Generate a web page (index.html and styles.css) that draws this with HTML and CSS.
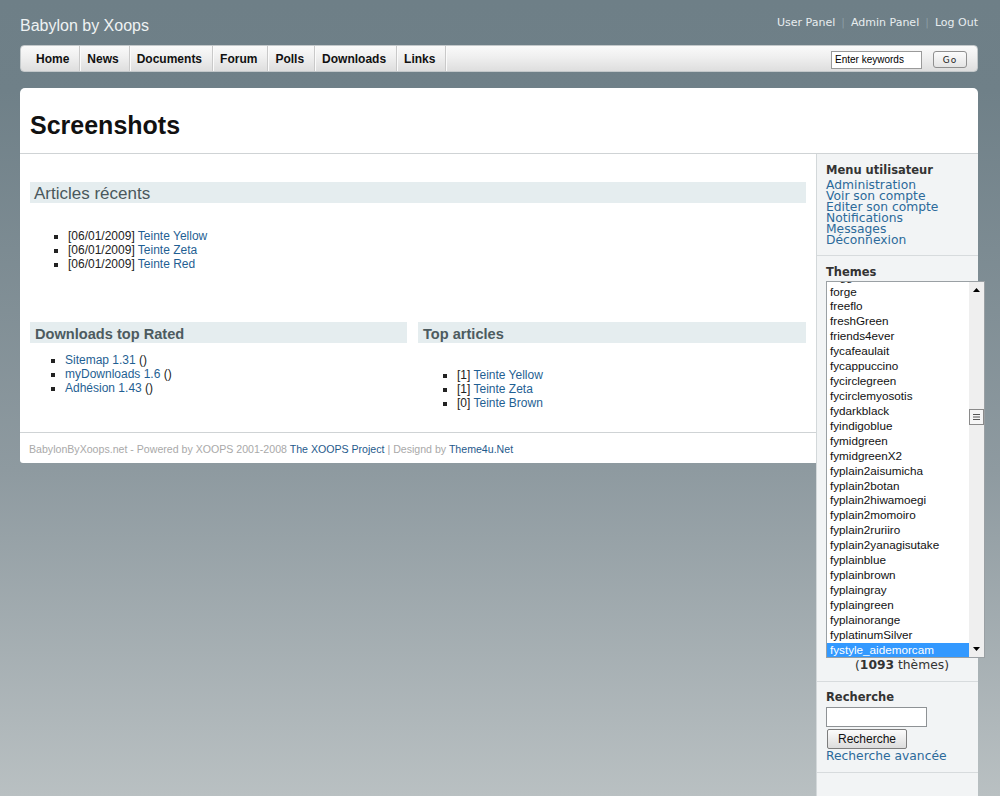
FILE: index.html
```html
<!DOCTYPE html>
<html lang="fr">
<head>
<meta charset="utf-8">
<title>Babylon by Xoops - Screenshots</title>
<link rel="stylesheet" href="styles.css">
</head>
<body>
<div class="page">
  <header class="top">
    <div class="site-name">Babylon by Xoops</div>
    <div class="user-links">
      <a href="#">User Panel</a><span class="sep">|</span><a href="#">Admin Panel</a><span class="sep">|</span><a href="#">Log Out</a>
    </div>
  </header>

  <nav class="navbar">
    <ul class="menu">
      <li><a href="#">Home</a></li>
      <li><a href="#">News</a></li>
      <li><a href="#">Documents</a></li>
      <li><a href="#">Forum</a></li>
      <li><a href="#">Polls</a></li>
      <li><a href="#">Downloads</a></li>
      <li><a href="#">Links</a></li>
    </ul>
    <form class="search">
      <input class="search-input" type="text" value="Enter keywords">
      <button class="go" type="button">Go</button>
    </form>
  </nav>

  <div class="box">
    <div class="title-bar"><h1>Screenshots</h1></div>
    <div class="columns">
      <main class="content">
        <div class="content-inner">
          <section class="block">
            <h2 class="block-title plain">Articles récents</h2>
            <ul class="items recent">
              <li>[06/01/2009] <a href="#">Teinte Yellow</a></li>
              <li>[06/01/2009] <a href="#">Teinte Zeta</a></li>
              <li>[06/01/2009] <a href="#">Teinte Red</a></li>
            </ul>
          </section>
          <div class="split">
            <section class="block">
              <h2 class="block-title">Downloads top Rated</h2>
              <ul class="items downloads">
                <li><a href="#">Sitemap 1.31</a> ()</li>
                <li><a href="#">myDownloads 1.6</a> ()</li>
                <li><a href="#">Adhésion 1.43</a> ()</li>
              </ul>
            </section>
            <section class="block">
              <h2 class="block-title">Top articles</h2>
              <ul class="items toparts">
                <li>[1] <a href="#">Teinte Yellow</a></li>
                <li>[1] <a href="#">Teinte Zeta</a></li>
                <li>[0] <a href="#">Teinte Brown</a></li>
              </ul>
            </section>
          </div>
        </div>
        <footer class="footer">BabylonByXoops.net - Powered by XOOPS 2001-2008 <a href="#">The XOOPS Project</a> | Designd by <a href="#">Theme4u.Net</a></footer>
      </main>

      <aside class="sidebar">
        <div class="side-block">
          <h3 class="side-title">Menu utilisateur</h3>
          <ul class="side-links">
            <li><a href="#">Administration</a></li>
            <li><a href="#">Voir son compte</a></li>
            <li><a href="#">Editer son compte</a></li>
            <li><a href="#">Notifications</a></li>
            <li><a href="#">Messages</a></li>
            <li><a href="#">Déconnexion</a></li>
          </ul>
        </div>
        <div class="side-block">
          <h3 class="side-title">Themes</h3>
          <div class="listbox">
            <ul class="options">
              <li>fogg</li>
              <li>forge</li>
              <li>freeflo</li>
              <li>freshGreen</li>
              <li>friends4ever</li>
              <li>fycafeaulait</li>
              <li>fycappuccino</li>
              <li>fycirclegreen</li>
              <li>fycirclemyosotis</li>
              <li>fydarkblack</li>
              <li>fyindigoblue</li>
              <li>fymidgreen</li>
              <li>fymidgreenX2</li>
              <li>fyplain2aisumicha</li>
              <li>fyplain2botan</li>
              <li>fyplain2hiwamoegi</li>
              <li>fyplain2momoiro</li>
              <li>fyplain2ruriiro</li>
              <li>fyplain2yanagisutake</li>
              <li>fyplainblue</li>
              <li>fyplainbrown</li>
              <li>fyplaingray</li>
              <li>fyplaingreen</li>
              <li>fyplainorange</li>
              <li>fyplatinumSilver</li>
              <li class="selected">fystyle_aidemorcam</li>
            </ul>
            <div class="scrollbar">
              <svg class="arrow" width="15" height="16" viewBox="0 0 15 16"><path d="M4 10 L7.5 6 L11 10 Z" fill="#000"/></svg>
              <svg class="thumb" width="15" height="16" viewBox="0 0 15 16"><rect x="0.5" y="0.5" width="14" height="15" fill="#f6f6f6" stroke="#8a8a8a"/><path d="M4 5.5 H11 M4 8 H11 M4 10.5 H11" stroke="#555" stroke-width="1"/></svg>
              <svg class="arrow down" width="15" height="16" viewBox="0 0 15 16"><path d="M4 6 L11 6 L7.5 10 Z" fill="#000"/></svg>
            </div>
          </div>
          <div class="count">(<b>1093</b> thèmes)</div>
        </div>
        <div class="side-block">
          <h3 class="side-title">Recherche</h3>
          <input class="side-input" type="text">
          <button class="side-button" type="button">Recherche</button>
          <a class="adv" href="#">Recherche avancée</a>
        </div>
        <div class="side-block last"></div>
      </aside>
    </div>
  </div>
</div>
</body>
</html>
```

FILE: styles.css
```css
html {
  height: 100%;
  background: linear-gradient(to bottom, #6e7f87 0px, #6f8088 90px, #8e9aa0 470px, #b9c0c2 796px) no-repeat;
  background-color: #b9c0c2;
}
body {
  margin: 0;
  height: 100%;
  overflow: hidden;
  font-family: "Liberation Sans", Arial, sans-serif;
  color: #222;
}
a { text-decoration: none; }
ul { margin: 0; padding: 0; }
h1, h2, h3 { margin: 0; }

.page {
  width: 958px;
  padding: 0 22px 0 20px;
}

/* Header */
.top {
  height: 45px;
  display: flex;
  justify-content: space-between;
  align-items: flex-start;
}
.site-name {
  padding-top: 17px;
  font-size: 16px;
  line-height: 18px;
  color: #eef2f3;
}
.user-links {
  padding-top: 16px;
  font-family: "DejaVu Sans", Verdana, sans-serif;
  font-size: 11px;
  line-height: 13px;
  color: #e8edef;
}
.user-links a { color: #e8edef; }
.user-links .sep { color: #8c9ca3; padding: 0 6px; }

/* Nav */
.navbar {
  height: 25px;
  border: 1px solid #c3c8ca;
  border-radius: 4px;
  background: linear-gradient(to bottom, #fafafa 0%, #efefef 45%, #dedede 100%);
  display: flex;
  justify-content: space-between;
  align-items: stretch;
  padding: 0 10px 0 8px;
  margin-bottom: 16px;
}
.menu {
  list-style: none;
  display: flex;
}
.menu li {
  border-right: 1px solid #c9c9c9;
  box-shadow: 1px 0 0 #fbfbfb;
}
.menu a {
  display: block;
  padding: 2px 10px 0 7px;
  font-size: 12px;
  font-weight: bold;
  line-height: 23px;
  color: #111;
}
.search {
  display: flex;
  align-items: center;
  gap: 11px;
  margin: 0;
  padding-top: 2px;
}
.search-input {
  box-sizing: border-box;
  width: 91px;
  height: 18px;
  margin: 0;
  padding: 0 3px;
  border: 1px solid #9a9a9a;
  background: #fff;
  font-family: "Liberation Sans", Arial, sans-serif;
  font-size: 10px;
  color: #000;
}
.go {
  box-sizing: border-box;
  width: 34px;
  height: 17px;
  margin: 0;
  padding: 0;
  border: 1px solid #8f8f8f;
  border-radius: 3px;
  background: linear-gradient(to bottom, #fbfbfb, #e4e4e4);
  font-family: "DejaVu Sans", Verdana, sans-serif;
  font-size: 9px;
  letter-spacing: 1px;
  color: #222;
}

/* Box */
.title-bar {
  height: 65px;
  background: #fff;
  border-radius: 5px 5px 0 0;
  border-bottom: 1px solid #cfd3d5;
  display: flex;
  align-items: center;
  padding: 0 10px;
}
.title-bar h1 {
  font-size: 25px;
  font-weight: bold;
  color: #111;
  padding-top: 10px;
}
.columns {
  display: flex;
  align-items: flex-start;
}
.content {
  width: 796px;
  background: #fff;
  border-radius: 0 0 0 3px;
}
.content-inner {
  padding: 28px 10px 0;
}
.block-title {
  height: 21px;
  line-height: 24px;
  padding-left: 5px;
  background: #e5edef;
  font-size: 14.6px;
  font-weight: bold;
  color: #4d5b5f;
}
.block-title.plain {
  padding-left: 4px;
  font-size: 17px;
  font-weight: normal;
  color: #4a585c;
}
.items {
  list-style: square;
  font-size: 12px;
  line-height: 14px;
  color: #222;
}
.items a { color: #1f5f93; }
.recent { margin-top: 26px; padding-left: 38px; }
.split {
  margin-top: 51px;
  display: grid;
  grid-template-columns: 377px 388px;
  column-gap: 11px;
}
.downloads { margin-top: 10px; padding-left: 35px; }
.toparts { margin-top: 25px; padding-left: 39px; }
.footer {
  margin-top: 22px;
  border-top: 1px solid #cfd3d5;
  padding: 10px 9px 8px;
  font-size: 10.6px;
  line-height: 12px;
  color: #a9a9a9;
}
.footer a { color: #1f5a8c; }

/* Sidebar */
.sidebar {
  width: 161px;
  min-height: 642px;
  border-left: 1px solid #d3d8da;
  background: #f2f4f5;
  display: flex;
  flex-direction: column;
  font-family: "DejaVu Sans", Verdana, sans-serif;
  font-size: 12.3px;
}
.side-block {
  padding: 9px 0 9px 9px;
  border-bottom: 1px solid #d7dbdd;
}
.side-block:nth-child(3) { padding-top: 8px; }
.side-block.last { flex: 1; border-bottom: 0; }
.side-title {
  font-size: 11.5px;
  font-weight: bold;
  line-height: 14px;
  color: #333;
  margin-bottom: 3px;
}
.side-block:nth-child(2) .side-title { margin-bottom: 2px; }
.side-links { list-style: none; }
.side-links li { line-height: 11px; }
.side-links a { color: #2c6a9a; }

.listbox {
  box-sizing: border-box;
  width: 159px;
  height: 377px;
  border: 1px solid #9aa0a4;
  background: #fff;
  display: flex;
  overflow: hidden;
}
.options {
  flex: 1;
  list-style: none;
  margin-top: -12.4px;
  font-family: "Liberation Sans", Arial, sans-serif;
  font-size: 11.7px;
  line-height: 14.92px;
  color: #111;
}
.options li { padding-left: 3px; white-space: nowrap; }
.options li.selected { background: #3399ff; color: #fff; }
.scrollbar {
  width: 15px;
  background: #efefef;
  display: flex;
  flex-direction: column;
}
.scrollbar svg { display: block; flex: none; }
.scrollbar .thumb { margin-top: 111px; }
.scrollbar .down { margin-top: auto; }
.count {
  text-align: center;
  line-height: 14px;
  color: #333;
}

.side-input {
  display: block;
  box-sizing: border-box;
  width: 101px;
  height: 20px;
  margin: 0;
  border: 1px solid #8e9295;
  background: #fff;
}
.side-button {
  display: block;
  box-sizing: border-box;
  width: 80px;
  height: 20px;
  margin: 2px 0 0 1px;
  padding: 0;
  border: 1px solid #7d7d7d;
  border-radius: 2px;
  background: linear-gradient(to bottom, #fcfcfc, #dcdcdc);
  font-family: "Liberation Sans", Arial, sans-serif;
  font-size: 12px;
  color: #111;
}
.adv {
  display: block;
  line-height: 14px;
  color: #2c6a9a;
}
```
